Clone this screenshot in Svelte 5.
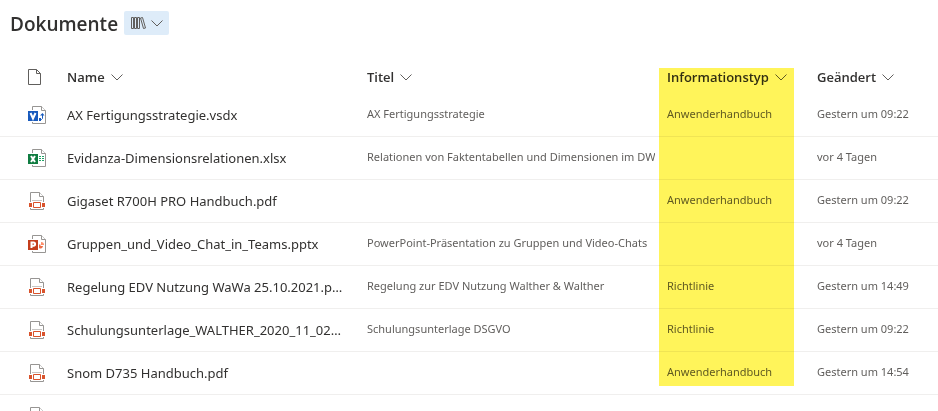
<!-- App.svelte: Dokumentbibliothek mit Listenansicht -->
<script lang="ts">
  type FileType = 'vsdx' | 'xlsx' | 'pdf' | 'pptx';

  interface Doc {
    type: FileType;
    name: string;
    title: string;
    info: string;
    modified: string;
  }

  const columns = [
    { key: 'name', label: 'Name' },
    { key: 'title', label: 'Titel' },
    { key: 'info', label: 'Informationstyp' },
    { key: 'modified', label: 'Geändert' }
  ];

  const docs: Doc[] = [
    {
      type: 'vsdx',
      name: 'AX Fertigungsstrategie.vsdx',
      title: 'AX Fertigungsstrategie',
      info: 'Anwenderhandbuch',
      modified: 'Gestern um 09:22'
    },
    {
      type: 'xlsx',
      name: 'Evidanza-Dimensionsrelationen.xlsx',
      title: 'Relationen von Faktentabellen und Dimensionen im DW',
      info: '',
      modified: 'vor 4 Tagen'
    },
    {
      type: 'pdf',
      name: 'Gigaset R700H PRO Handbuch.pdf',
      title: '',
      info: 'Anwenderhandbuch',
      modified: 'Gestern um 09:22'
    },
    {
      type: 'pptx',
      name: 'Gruppen_und_Video_Chat_in_Teams.pptx',
      title: 'PowerPoint-Präsentation zu Gruppen und Video-Chats',
      info: '',
      modified: 'vor 4 Tagen'
    },
    {
      type: 'pdf',
      name: 'Regelung EDV Nutzung WaWa 25.10.2021.pdf',
      title: 'Regelung zur EDV Nutzung Walther & Walther',
      info: 'Richtlinie',
      modified: 'Gestern um 14:49'
    },
    {
      type: 'pdf',
      name: 'Schulungsunterlage_WALTHER_2020_11_02 .pdf',
      title: 'Schulungsunterlage DSGVO',
      info: 'Richtlinie',
      modified: 'Gestern um 09:22'
    },
    {
      type: 'pdf',
      name: 'Snom D735 Handbuch.pdf',
      title: '',
      info: 'Anwenderhandbuch',
      modified: 'Gestern um 14:54'
    },
    { type: 'pdf', name: '', title: '', info: '', modified: 'vor 4 Tagen' }
  ];
</script>

{#snippet chevron()}
  <svg class="chevron" viewBox="0 0 12 12" aria-hidden="true">
    <path d="M.5 3.500 6 9l5.500-5.500" />
  </svg>
{/snippet}

{#snippet fileIcon(type: FileType)}
  <svg class="file-icon" viewBox="0 0 20 20" role="img" aria-label={type}>
    {#if type === 'pdf'}
      <path class="sheet" d="M3.500 1.500h9l4 4v13h-13z" />
      <path class="sheet" d="M12.500 1.500v4h4" />
      <path class="rule" d="M5 9.500h10" />
      <path fill="#fff" d="M3 11h14v6H3z" />
      <path fill="#d9532c" d="M2 12h3v4H2zM15 12h3v4h-3z" />
      <path fill="#fff" stroke="#d9532c" d="M6.500 11.500h7v5h-7z" />
    {:else}
      <path class="sheet" d="M5.500 1.500h9l4 4v13h-13z" />
      <path class="sheet" d="M14.500 1.500v4h4" />
      <path fill="#fff" d="M5 5h7v12H5z" />
      {#if type === 'vsdx'}
        <path fill="none" stroke="#185abd" d="M12 14.500h2.500l1-1V9" />
        <path fill="#185abd" d="m13 10.500 2.500-2.500 2 2.500zM12 13h2v3h-2z" />
        <path fill="#185abd" d="M1 6h10v10H1z" />
        <path class="letter" d="M3.500 8 6 13.500 8.500 8" />
      {:else if type === 'xlsx'}
        <path
          fill="none"
          stroke="#21a366"
          stroke-dasharray="2 1"
          d="M12 8.500h5M12 10.500h5M12 12.500h5"
        />
        <path fill="#107c41" d="M1 6h10v10H1z" />
        <path class="letter" d="m4 8 4 6M8 8l-4 6" />
      {:else}
        <path fill="#ff8f6b" d="M14 8a3 3 0 0 1 3 3h-3z" />
        <path fill="#ed6c47" d="M12 10.500h1.500v1.500H16a2.500 2.500 0 0 1-4 2z" />
        <path fill="#c43e1c" d="M1 6h10v10H1z" />
        <path class="letter" d="M4.500 14V8.500h2a1.600 1.600 0 0 1 0 3.200h-2" />
      {/if}
    {/if}
  </svg>
{/snippet}

<main class="library">
  <header class="library-header">
    <h1>Dokumente</h1>
    <button type="button" class="view-switch" aria-label="Bibliothek wechseln">
      <svg class="books" viewBox="0 0 16 16" aria-hidden="true">
        <path
          d="M1.500 2.500h2v11h-2zM4.500 2.500h2v11h-2zM7.500 2.500h2v11h-2zM10.500 3l2-.5 3 10.500-2 .5z"
        />
      </svg>
      {@render chevron()}
    </button>
  </header>

  <table>
    <thead>
      <tr>
        <th class="col-icon">
          <svg class="doc-icon" viewBox="0 0 20 20" role="img" aria-label="Dateityp">
            <path d="M3.500 2.500h8l4 4v11h-12zM11.500 2.500v4h4" />
          </svg>
        </th>
        {#each columns as column}
          <th class="col-{column.key}">
            <button type="button" class="sort">
              {column.label}
              {@render chevron()}
            </button>
            {#if column.key === 'info'}
              <span class="marker"></span>
            {/if}
          </th>
        {/each}
      </tr>
    </thead>
    <tbody>
      {#each docs as doc}
        <tr>
          <td class="col-icon">{@render fileIcon(doc.type)}</td>
          <td class="col-name"><a href="#datei">{doc.name}</a></td>
          <td class="col-title"><div class="clip">{doc.title}</div></td>
          <td>{doc.info}</td>
          <td>{doc.modified}</td>
        </tr>
      {/each}
    </tbody>
  </table>
</main>

<style>
  :global(body) {
    margin: 0;
    background: #fff;
  }

  .library {
    height: 100vh;
    overflow: hidden;
    color: #323130;
    font-family: 'Segoe UI', 'Open Sans', 'Noto Sans', sans-serif;
  }

  .library-header {
    display: flex;
    align-items: center;
    gap: 6px;
    padding: 8px 10px 0;
  }

  h1 {
    margin: 0;
    padding-top: 2px;
    font-size: 19px;
    font-weight: 600;
    line-height: 28px;
  }

  button {
    display: flex;
    align-items: center;
    border: 0;
    color: inherit;
    font-family: inherit;
    cursor: pointer;
  }

  .view-switch {
    gap: 5px;
    height: 24px;
    padding: 0 6px;
    border-radius: 2px;
    background: #deecf9;
  }

  .books {
    width: 16px;
    height: 16px;
    fill: none;
    stroke: #605e5c;
  }

  .chevron {
    width: 12px;
    height: 12px;
    fill: none;
    stroke: #605e5c;
  }

  table {
    width: 100%;
    margin-top: 22px;
    border-collapse: separate;
    border-spacing: 0;
    table-layout: fixed;
  }

  th,
  td {
    box-sizing: border-box;
    padding: 0 12px 0 8px;
    text-align: left;
    white-space: nowrap;
  }

  th {
    position: relative;
    height: 34px;
  }

  td {
    height: 43px;
    padding-bottom: 2px;
    border-bottom: 1px solid #f0efee;
    color: #605e5c;
    font-family: 'Segoe UI', 'Noto Sans', 'Open Sans', sans-serif;
    font-size: 11px;
    line-height: 16px;
  }

  .col-icon {
    width: 59px;
    padding: 0 0 0 27px;
  }

  .col-name,
  .col-title {
    width: 300px;
  }

  .col-info {
    width: 150px;
  }

  td.col-name {
    padding-right: 16px;
    padding-bottom: 0;
    overflow: hidden;
    color: #323130;
    font-size: 13px;
    text-overflow: ellipsis;
  }

  .col-title {
    padding-right: 4px;
  }

  .clip {
    overflow: hidden;
  }

  .sort {
    gap: 6px;
    padding: 0;
    background: none;
    font-size: 13px;
    font-weight: 600;
    line-height: 20px;
  }

  a {
    color: inherit;
    text-decoration: none;
  }

  .doc-icon,
  .file-icon {
    display: block;
    width: 20px;
    height: 20px;
  }

  .doc-icon {
    margin-left: -2px;
    fill: none;
    stroke: #605e5c;
  }

  .sheet {
    fill: #fff;
    stroke: #979593;
  }

  .rule {
    stroke: #c8c6c4;
  }

  .letter {
    fill: none;
    stroke: #fff;
    stroke-width: 2;
  }

  /* Textmarker über der Spalte Informationstyp */
  .marker {
    position: absolute;
    top: 8px;
    left: 0;
    width: 135px;
    height: 318px;
    background: #fff45a;
    mix-blend-mode: multiply;
    pointer-events: none;
  }
</style>
